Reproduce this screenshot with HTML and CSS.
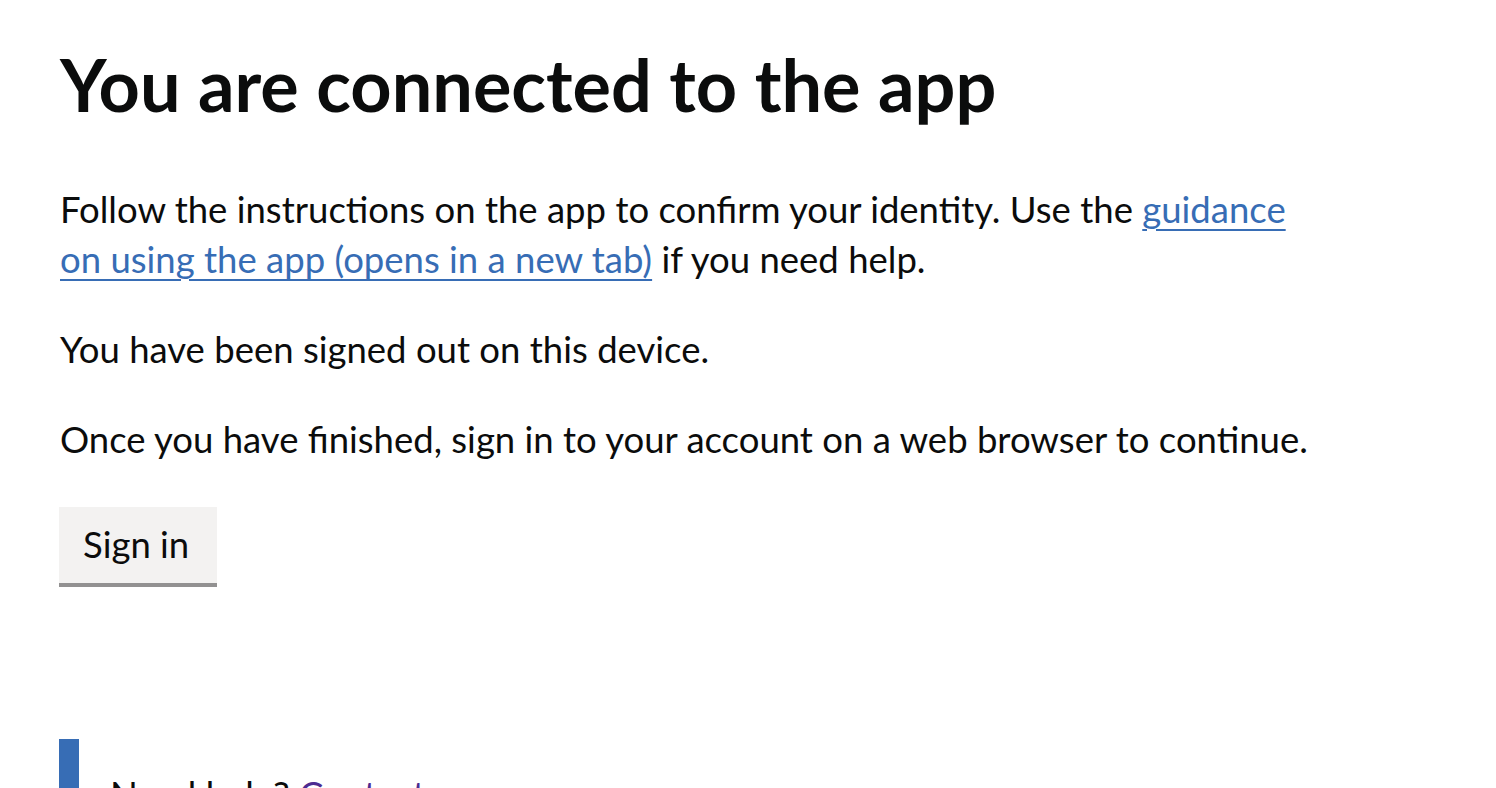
FILE: index.html
```html
<!DOCTYPE html>
<html lang="en">
<head>
<meta charset="utf-8">
<title>You are connected to the app</title>
<link rel="stylesheet" href="styles.css">
</head>
<body>
<main class="page">
  <h1 class="heading">You are connected to the app</h1>
  <p class="body">Follow the instructions on the app to confirm your identity. Use the <a class="link" href="#">guidance on using the app (opens in a new tab)</a> if you need help.</p>
  <p class="body">You have been signed out on this device.</p>
  <p class="body">Once you have finished, sign in to your account on a web browser to continue.</p>
  <button class="button" type="button">Sign in</button>
  <div class="inset">
    <p class="body">Need help? <a class="link link-visited" href="#">Contact us</a></p>
  </div>
</main>
</body>
</html>
```
FILE: styles.css
```css
html, body {
  margin: 0;
  padding: 0;
  background: #ffffff;
}
body {
  font-family: Lato, "Noto Sans", "Liberation Sans", sans-serif;
  color: #0b0c0c;
  overflow: hidden;
}
.page {
  padding: 44px 60px 0 60px;
  max-width: 1260px;
}
.heading {
  margin: 0 0 60px 0;
  font-size: 72px;
  line-height: 80px;
  font-weight: 700;
  letter-spacing: 0;
}
.body {
  margin: 0 0 40px 0;
  font-size: 36.5px;
  line-height: 50px;
  font-weight: 400;
}
.link {
  color: #376db5;
  text-decoration: underline;
  text-decoration-thickness: 2px;
  text-underline-offset: 6px;
}
.link-visited {
  color: #4c2c92;
}
.button {
  display: block;
  margin: 43px 0 156px -1px;
  padding: 12px 28px 14px 24px;
  border: 0;
  border-radius: 0;
  background: #f3f2f1;
  box-shadow: 0 4px 0 #929191;
  font-family: inherit;
  font-size: 36.5px;
  line-height: 50px;
  color: #0b0c0c;
  cursor: pointer;
}
.inset {
  margin-left: -1px;
  border-left: 20px solid #376db5;
  padding: 30px 30px 30px 31px;
}
.inset .body {
  margin: 0;
}
```
